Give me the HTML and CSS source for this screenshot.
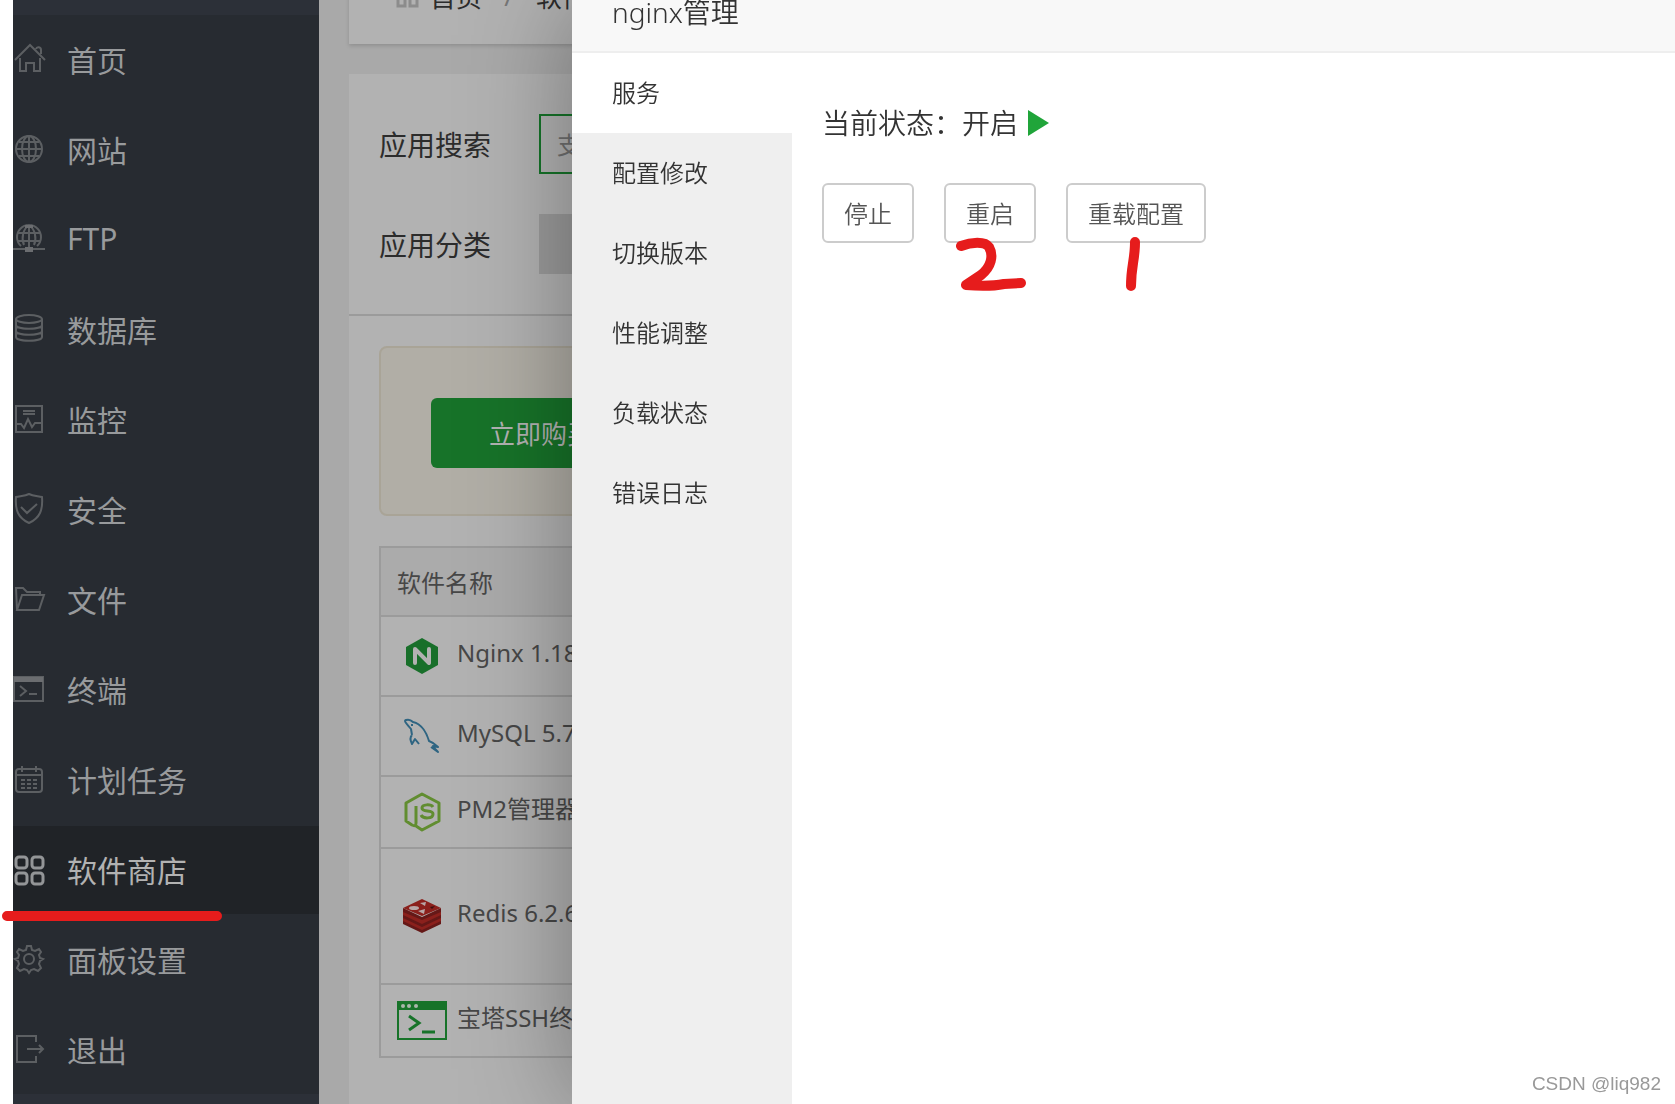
FILE: index.html
```html
<!DOCTYPE html>
<html lang="zh-CN">
<head>
<meta charset="utf-8">
<meta name="viewport" content="width=device-width, initial-scale=1">
<title>nginx管理</title>
<link rel="stylesheet" href="styles.css">
</head>
<body>
<div class="app">
  <nav class="sidebar">
    <ul class="menu">
      <li><a class="menu-item" href="#home"><svg class="menu-icon" viewBox="0 0 32 32"><path d="M2 17 17 2l15 15M7 15v13h6v-8h8v8h6V15M23 6c1-3 5-2 5 1v4"/></svg>首页</a></li>
      <li><a class="menu-item" href="#site"><svg class="menu-icon" viewBox="0 0 32 32"><circle cx="16" cy="16" r="13"/><ellipse cx="16" cy="16" rx="7" ry="13"/><path d="M16 3v26M3 16h26M6 9h20M6 23h20"/></svg>网站</a></li>
      <li><a class="menu-item" href="#ftp"><svg class="menu-icon" viewBox="0 0 32 32"><path d="M8 23a12 12 0 1 1 16 0M11 22C8 15 10 6 16 2c6 4 8 13 5 20M16 2v22M5 10h22M5 18h22M0 26h32"/><path class="solid" d="M12 24h8v5h-8zM12 2h8v3h-8z"/></svg>FTP</a></li>
      <li><a class="menu-item" href="#database"><svg class="menu-icon" viewBox="0 0 32 32"><ellipse cx="16" cy="6" rx="13" ry="4"/><path d="M3 6v18c0 5 26 5 26 0V6M3 12c0 5 26 5 26 0M3 18c0 5 26 5 26 0"/></svg>数据库</a></li>
      <li><a class="menu-item" href="#monitor"><svg class="menu-icon" viewBox="0 0 32 32"><path d="M3 3h26v26H3zM3 21h5l3 4 4-9 4 8 3-4h7M10 8h12M10 11h12"/></svg>监控</a></li>
      <li><a class="menu-item" href="#security"><svg class="menu-icon" viewBox="0 0 32 32"><path d="M16 1c4 2 9 2 13 3 1 13-2 21-13 26C5 25 2 17 3 4c4-1 9-1 13-3zM8 14l6 6 10-9"/></svg>安全</a></li>
      <li><a class="menu-item" href="#files"><svg class="menu-icon" viewBox="0 0 32 32"><path d="M4 27 3 5h7l4 4h13v3M4 27 9 12h22l-5 15z"/></svg>文件</a></li>
      <li><a class="menu-item" href="#terminal"><svg class="menu-icon" viewBox="0 0 32 32"><path d="M1 4h29v24H1zM7 13l6 5-6 5M16 21h8"/><path class="solid" d="M1 4h29v5H1z"/></svg>终端</a></li>
      <li><a class="menu-item" href="#cron"><svg class="menu-icon" viewBox="0 0 32 32"><rect x="3" y="6" width="26" height="23" rx="3"/><path d="M3 12h26M9 3v6M23 3v6"/><path stroke-dasharray="4 2" d="M8 17h17M8 21h17M8 25h17"/></svg>计划任务</a></li>
      <li><a class="menu-item active" href="#store" aria-current="page"><svg class="menu-icon" viewBox="0 0 32 32"><rect x="3" y="4" width="11" height="11" rx="3"/><rect x="19" y="4" width="11" height="11" rx="3"/><rect x="3" y="20" width="11" height="11" rx="3"/><rect x="19" y="20" width="11" height="11" rx="3"/></svg>软件商店</a></li>
      <li><a class="menu-item" href="#config"><svg class="menu-icon" viewBox="0 0 32 32"><circle cx="16" cy="16" r="5"/><path d="M14 3h4l1 4 3 1 4-2 2 3-2 3 1 3 3 1-3 2-1 3 2 4-3 3-4-2-3 1-2 3-2-3-3-1-4 2-3-3 2-4-1-3-3-2 3-1 1-3-2-3 2-3 4 2 3-1z"/></svg>面板设置</a></li>
      <li><a class="menu-item" href="#logout"><svg class="menu-icon" viewBox="0 0 32 32"><path d="M23 9V3H4v26h19v-6M14 16h16M26 12l4 4-4 4"/></svg>退出</a></li>
    </ul>
  </nav>

  <main class="main">
    <header class="crumbs">
      <svg class="crumb-icon" viewBox="0 0 24 24"><path d="M2 2h7v7H2zM14 2h7v7h-7zM2 14h7v8H2zM14 14h7v8h-7z"/></svg>
      <a href="#home">首页</a><span class="slash">/</span><a href="#store">软件商店</a>
    </header>
    <section class="card">
      <form class="filters">
        <div class="filter">
          <label for="search">应用搜索</label>
          <input id="search" class="search" type="text" placeholder="支持应用名称、字段模糊搜索">
        </div>
        <div class="filter">
          <span>应用分类</span>
          <button type="button" class="category">全部</button>
        </div>
      </form>
      <div class="content">
        <div class="promo"><button type="button" class="buy">立即购买</button></div>
        <table class="software">
          <thead><tr><th>软件名称</th></tr></thead>
          <tbody>
            <tr class="row"><td><div class="name"><svg viewBox="0 0 50 40"><path fill="#186f2a" d="M25 2 41 11v18L25 38 9 29V11z"/><path fill="none" stroke="#b2b2b2" stroke-width="4" stroke-linecap="round" stroke-linejoin="round" d="M18 27V13l14 14V13"/></svg>Nginx 1.18.0</div></td></tr>
            <tr class="row"><td><div class="name"><svg viewBox="0 0 50 40"><path fill="none" stroke="#2f6582" stroke-width="2" stroke-linejoin="round" d="M15 19 14 13C11 9 6 5 9 4c3-1 5 0 7 2 9 2 14 12 16 19 3 1 6 3 9 6l-5-1c1 3 4 4 5 6l-7-5M15 19c-3 3-1 7 0 9l3-5 4 5M15 8v2"/></svg>MySQL 5.7.34</div></td></tr>
            <tr class="row-short"><td><div class="name"><svg viewBox="0 0 50 40"><path fill="none" stroke="#618d30" stroke-width="3" stroke-linejoin="round" d="M19 14v17q0 4-4 2l-6-4V11l16-9 17 9v18l-17 9-6-4M36 15c-2-3-11-3-11 1 0 5 11 1 11 6 0 5-10 5-12 1"/></svg>PM2管理器 5.2</div></td></tr>
            <tr class="row-tall"><td><div class="name"><svg viewBox="0 0 50 40"><path fill="#651817" d="m6 12 19 9 19-9v16L25 37 6 28z"/><path fill="#8b201c" d="m6 22 19 9 19-9v3l-19 9-19-9zM6 16l19 8 19-8v3l-19 9-19-9zM25 3l19 9-19 8-19-8z"/><ellipse cx="17" cy="12" rx="5" ry="2" fill="#b8a6a6"/><path fill="#b8a6a6" d="m21 15 7-2-1 5zM23 7l6-1-1 4z"/><path fill="#3c0f0e" d="m33 11 5-1-3 3z"/></svg>Redis 6.2.6</div></td></tr>
            <tr class="row-last"><td><div class="name"><svg viewBox="0 0 50 40"><path fill="none" stroke="#177329" stroke-width="2" d="M1 1h48v37H1z"/><path fill="#177329" d="M0 0h50v9H0z"/><g fill="#a9b6aa"><circle cx="6" cy="5" r="2"/><circle cx="12" cy="5" r="2"/><circle cx="19" cy="5" r="2"/></g><path fill="none" stroke="#177329" stroke-width="3" d="m12 15 10 7-10 7M25 31h13"/></svg>宝塔SSH终端</div></td></tr>
          </tbody>
        </table>
      </div>
    </section>
  </main>
</div>

<section class="drawer" role="dialog" aria-labelledby="drawer-title">
  <h1 class="drawer-title" id="drawer-title">nginx管理</h1>
  <div class="drawer-body">
    <nav class="tabs">
      <a class="tab current" href="#service">服务</a>
      <a class="tab" href="#conf">配置修改</a>
      <a class="tab" href="#version">切换版本</a>
      <a class="tab" href="#tuning">性能调整</a>
      <a class="tab" href="#load">负载状态</a>
      <a class="tab" href="#errors">错误日志</a>
    </nav>
    <div class="panel">
      <p class="status">当前状态：开启<svg class="play" viewBox="0 0 21 26"><path d="M0 0v26l21-13z"/></svg></p>
      <div class="actions">
        <button type="button">停止</button>
        <button type="button">重启</button>
        <button type="button">重载配置</button>
      </div>
    </div>
  </div>
</section>

<svg class="marks" viewBox="0 0 1300 700" aria-hidden="true">
  <path d="M7 916H217M961 246c10-4 24-5 28 1 5 9 2 20-8 28l-15 10c12 1 28 1 38-1l17-1M1135 242c0 18-4 24-4 44"/>
</svg>
<p class="watermark">CSDN @liq982</p>
</body>
</html>
```

FILE: styles.css
```css
* { box-sizing: border-box; }

body {
  margin: 0;
  background: #fff;
  color: #333;
  font-family: "Noto Sans", "Noto Sans CJK SC", sans-serif;
  font-size: 24px;
  overflow: hidden;
}

a { color: inherit; text-decoration: none; }
button, input { font: inherit; }

.app {
  display: flex;
  height: 100vh;
  padding-left: 13px;
}

/* Sidebar */
.sidebar {
  flex: 0 0 306px;
  padding-top: 15px;
  background: #2c3038;
}

.menu {
  display: flex;
  flex-direction: column;
  gap: 2px;
  margin: 0;
  padding: 1px 0 0;
  background: #272b31;
  list-style: none;
}

.menu-item {
  display: flex;
  align-items: center;
  gap: 22px;
  height: 88px;
  padding-bottom: 3px;
  color: #989a9c;
  font-size: 30px;
}

.menu-item.active { background: #202327; color: #b2b2b2; }

.menu-icon {
  width: 32px;
  height: 32px;
  overflow: visible;
  fill: none;
  stroke: #5c5f62;
  stroke-width: 2;
}

.menu-icon .solid { fill: #6b6d70; stroke: none; }
.active .menu-icon { stroke: #939597; stroke-width: 3; }

/* Page behind the drawer */
.main {
  flex: 1;
  display: flex;
  flex-direction: column;
  gap: 30px;
  min-width: 0;
  padding-left: 30px;
  background: #a9a9a9;
  color: #2c2c2c;
}

.crumbs {
  display: flex;
  flex: none;
  align-items: center;
  height: 96px;
  margin-top: -52px;
  padding-left: 47px;
  background: #b2b2b2;
  box-shadow: 0 2px 4px rgba(0, 0, 0, .15);
  font-size: 26px;
}

.crumb-icon {
  width: 24px;
  height: 24px;
  margin-right: 10px;
  fill: none;
  stroke: #8c8c8c;
  stroke-width: 3;
}

.slash { width: 54px; color: #777; text-align: center; }

.card { flex: 1; background: #b2b2b2; }

.filters {
  display: flex;
  flex-direction: column;
  gap: 40px;
  padding: 40px 0 40px 30px;
  border-bottom: 2px solid #9b9b9b;
}

.filter { display: flex; align-items: center; font-size: 28px; }
.filter > :first-child { width: 160px; }

.search {
  width: 500px;
  height: 60px;
  padding: 0 16px;
  border: 2px solid #167329;
  border-radius: 0;
  background: transparent;
  font-size: 24px;
}

.search::placeholder { color: #6f6f6f; opacity: 1; }

.category {
  width: 120px;
  height: 60px;
  border: 0;
  background: #9b9b9b;
  font-size: 24px;
}

.content { padding: 30px; }

.promo {
  height: 170px;
  padding: 50px;
  border: 2px solid #a9a497;
  border-radius: 8px;
  background: #b1aea6;
}

.buy {
  display: block;
  width: 220px;
  height: 70px;
  border: 0;
  border-radius: 6px;
  background: #177329;
  color: #b2b2b2;
  font-size: 26px;
}

.software {
  width: 100%;
  margin-top: 30px;
  border: solid #9b9b9b;
  border-width: 2px 2px 0;
  border-spacing: 0;
  color: #474747;
}

.software th, .software td {
  padding: 0 16px;
  border-bottom: 2px solid #9b9b9b;
  text-align: left;
}

.software th { height: 69px; background: #ababab; font-weight: 400; }
.row td { height: 80px; }
.row-short td { height: 72px; }
.row-tall td { height: 136px; }
.row-last td { height: 73px; }

.name { display: flex; gap: 10px; line-height: 34px; }
.name svg { width: 50px; height: 40px; }

/* Drawer */
.drawer {
  position: fixed;
  inset: 0 0 0 572px;
  display: flex;
  flex-direction: column;
  background: #fff;
  box-shadow: 0 0 100px rgba(0, 0, 0, .35);
}

.drawer-title {
  margin: 0;
  padding: 0 0 27px 40px;
  border-bottom: 2px solid #eee;
  background: #f8f8f8;
  font-size: 28px;
  line-height: 24px;
}

.drawer-body { flex: 1; display: flex; }
.tabs { flex: 0 0 220px; background: #efefef; }

.tab { display: block; padding-left: 40px; line-height: 80px; }
.tab.current { background: #fff; }

.panel { padding: 50px 30px; }

.status {
  display: flex;
  align-items: center;
  gap: 10px;
  margin: 0 0 40px;
  font-size: 28px;
  line-height: 40px;
}

.play { width: 21px; height: 26px; fill: #20a53a; }

.actions { display: flex; gap: 30px; }

.actions button {
  height: 60px;
  padding: 0 20px 2px;
  border: 2px solid #ccc;
  border-radius: 6px;
  background: #fff;
  color: #555;
}

.drawer-title, .tab, .status, .actions button { font-weight: 350; }

/* Red pen strokes over the page */
.marks {
  position: absolute;
  top: 0;
  left: 0;
  width: 1300px;
  height: 700px;
  overflow: visible;
  pointer-events: none;
  fill: none;
  stroke: #e61c1c;
  stroke-width: 10;
  stroke-linecap: round;
  stroke-linejoin: round;
}

.watermark {
  position: fixed;
  right: 14px;
  bottom: 8px;
  margin: 0;
  color: #999;
  font-family: "Liberation Sans", sans-serif;
  font-size: 19px;
  line-height: 24px;
}
```
